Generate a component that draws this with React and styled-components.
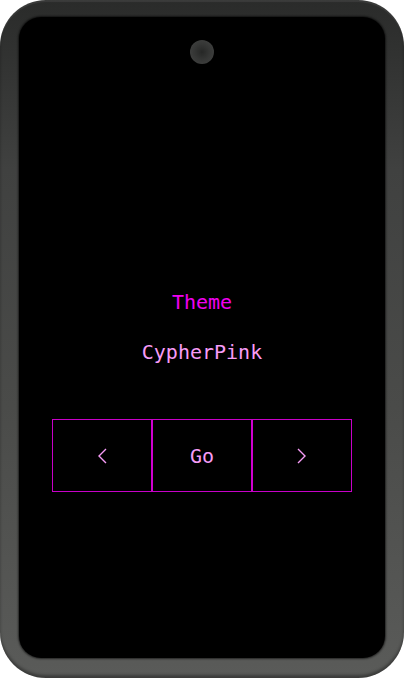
import styled, { createGlobalStyle } from "styled-components";

const Global = createGlobalStyle`
  html, body {
    margin: 0;
    padding: 0;
    background: #ffffff;
  }
  body {
    font-family: "DejaVu Sans Mono", "Liberation Mono", monospace;
  }
`

const Phone = styled.div`
  width: 404px;
  height: 678px;
  box-sizing: border-box;
  padding: 17px 19px 20px 19px;
  border-radius: 46px;
  background: linear-gradient(to bottom, #2a2b2a 0%, #404140 25%, #4a4b49 60%, #5a5b59 100%);
  box-shadow: inset 0 2px 1px rgba(255,255,255,0.08), inset 0 -3px 3px rgba(0,0,0,0.35);
`

const Screen = styled.div`
  height: 100%;
  border-radius: 22px;
  background: #000;
  display: flex;
  flex-direction: column;
  align-items: center;
  box-shadow: 0 0 2px 1px rgba(0,0,0,0.6);
`

const Camera = styled.div`
  width: 24px;
  height: 24px;
  margin-top: 23px;
  border-radius: 50%;
  background: radial-gradient(circle at 50% 50%, #262726 0%, #353635 45%, #3c3d3c 70%, #1a1a1a 100%);
  filter: blur(0.6px);
`

const Label = styled.div`
  margin-top: 226px;
  font-size: 20px;
  line-height: 24px;
  color: ${p => p.color};
`

const Value = styled(Label)`
  margin-top: 26px;
`

const Row = styled.div`
  margin-top: 55px;
  width: 300px;
  height: 73px;
  box-sizing: border-box;
  border: 1px solid #c800c8;
  display: grid;
  grid-template-columns: 98px 102px 1fr;
`

const Cell = styled.div`
  display: flex;
  align-items: center;
  justify-content: center;
  color: #f79cf7;
  font-size: 20px;
  border-left: ${p => (p.divided ? "2px solid #d000d0" : "none")};
  border-right: ${p => (p.divided ? "2px solid #d000d0" : "none")};
`

const Chevron = ({ dir }) => (
  <svg width="10" height="16" viewBox="0 0 10 16">
    <path
      d={dir === "left" ? "M9 1 L2 8 L9 15" : "M1 1 L8 8 L1 15"}
      fill="none"
      stroke="#f79cf7"
      strokeWidth="1.4"
    />
  </svg>
)

const App = () => {
  return (
    <>
      <Global />
      <Phone>
        <Screen>
          <Camera />
          <Label color="#f000f0">Theme</Label>
          <Value color="#f79cf7">CypherPink</Value>
          <Row>
            <Cell><Chevron dir="left" /></Cell>
            <Cell divided>Go</Cell>
            <Cell><Chevron dir="right" /></Cell>
          </Row>
        </Screen>
      </Phone>
    </>
  )
}

export default App;
